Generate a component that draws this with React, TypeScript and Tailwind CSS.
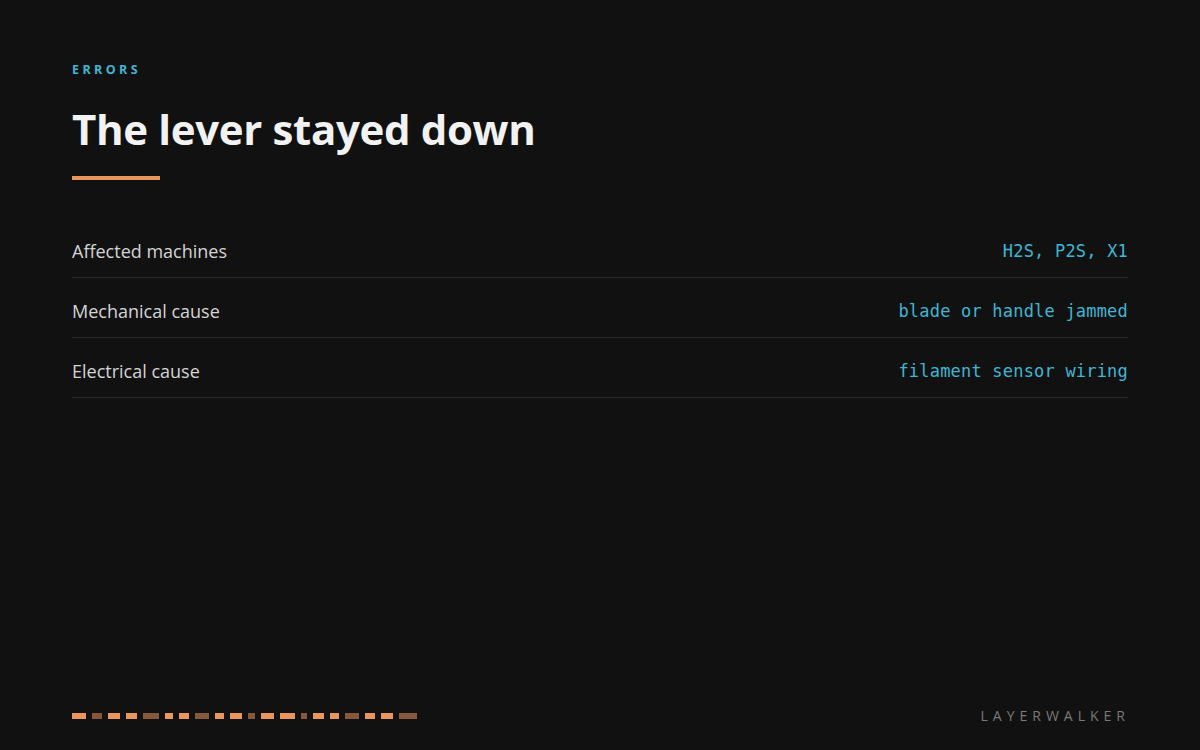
import React from "react";

const dashes: [number, boolean][] = [
  [14, true], [10, false], [12, true], [11, true], [16, false], [8, true], [10, true],
  [14, false], [9, true], [12, true], [7, false], [13, true], [15, true], [6, false],
  [11, true], [9, true], [14, false], [10, true], [12, true], [18, false],
];

const rows = [
  ["Affected machines", "H2S, P2S, X1"],
  ["Mechanical cause", "blade or handle jammed"],
  ["Electrical cause", "filament sensor wiring"],
];

export default function App() {
  return (
    <div
      className="w-[1200px] h-[750px] bg-[#111111] flex flex-col px-[72px] pt-[62px] pb-[24px]"
      style={{ fontFamily: '"Open Sans", "Noto Sans", sans-serif' }}
    >
      <div className="text-[12.5px] font-bold tracking-[3.4px] text-[#3fb6d3] leading-[16px]">ERRORS</div>
      <h1 className="mt-[23px] text-[42px] font-bold text-[#f2f2f2] leading-[56px] tracking-[-0.35px]">
        The lever stayed down
      </h1>
      <div className="mt-[19px] w-[88px] h-[4px] bg-[#e8955e]" />
      <div className="mt-[38px] flex flex-col">
        {rows.map(([k, v]) => (
          <div key={k} className="h-[60px] pt-[8px] flex items-center justify-between border-b border-[#2a2a2a]">
            <span className="text-[18px] text-[#d4d4d4]">{k}</span>
            <span
              className="text-[17px] text-[#3fb6d3] tracking-[0.2px]"
              style={{ fontFamily: '"DejaVu Sans Mono", "Liberation Mono", monospace' }}
            >
              {v}
            </span>
          </div>
        ))}
      </div>
      <div className="mt-auto flex items-center justify-between">
        <div className="flex gap-[6px]">
          {dashes.map(([w, b], i) => (
            <div key={i} className={b ? "h-[6px] bg-[#e8955e]" : "h-[6px] bg-[#86583a]"} style={{ width: w }} />
          ))}
        </div>
        <div className="text-[14px] tracking-[5px] text-[#7a7a7a] mr-[-2px]">LAYERWALKER</div>
      </div>
    </div>
  );
}
